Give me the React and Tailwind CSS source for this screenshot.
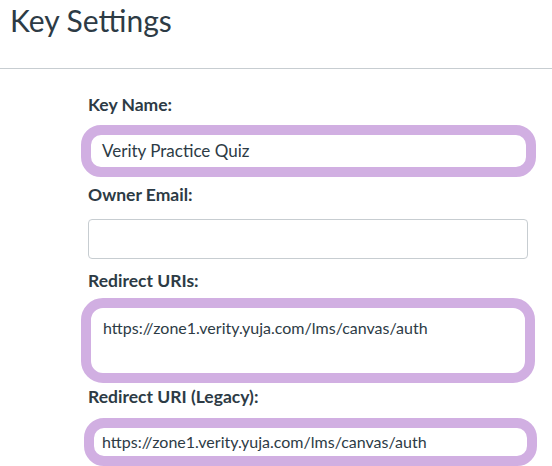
export default function App() {
    return (
        <div
            className="w-[552px] h-[466px] overflow-hidden bg-white text-[#2d3b45]"
            style={{ fontFamily: "Lato, 'Open Sans', sans-serif" }}
        >
            <div className="h-[69px] border-b border-[#c7cdd1] pl-[10px] pt-[2px]">
                <h1 className="text-[30px] leading-[36px] font-normal">Key Settings</h1>
            </div>

            <div className="pl-[88px] w-[528px]">
                <label className="block mt-[26px] text-[17.5px] leading-[20px] font-bold">
                    Key Name:
                </label>
                <div className="mt-[10px] -ml-[7px] w-[455px] h-[52px] border-[10px] border-[#d1afe2] rounded-[20px] flex items-center pl-[11px] text-[17px]">
                    Verity Practice Quiz
                </div>

                <label className="block mt-[8px] text-[17.5px] leading-[20px] font-bold">
                    Owner Email:
                </label>
                <div className="mt-[14px] w-[440px] h-[40px] border border-[#c7cdd1] rounded-[4px]"></div>

                <label className="block mt-[12px] text-[17.5px] leading-[20px] font-bold">
                    Redirect URIs:
                </label>
                <div className="mt-[7px] -ml-[7px] w-[454px] h-[85px] border-[10px] border-[#d1afe2] rounded-[22px] pl-[12px] pt-[10px] text-[16px] leading-[20px]">
                    https://zone1.verity.yuja.com/lms/canvas/auth
                </div>

                <label className="block mt-[4px] text-[17.5px] leading-[20px] font-bold">
                    Redirect URI (Legacy):
                </label>
                <div className="mt-[11px] -ml-[4px] w-[453px] h-[48px] border-[10px] border-[#d1afe2] rounded-[20px] flex items-center pl-[8px] text-[16px] leading-[20px]">
                    https://zone1.verity.yuja.com/lms/canvas/auth
                </div>
            </div>
        </div>
    );
}
